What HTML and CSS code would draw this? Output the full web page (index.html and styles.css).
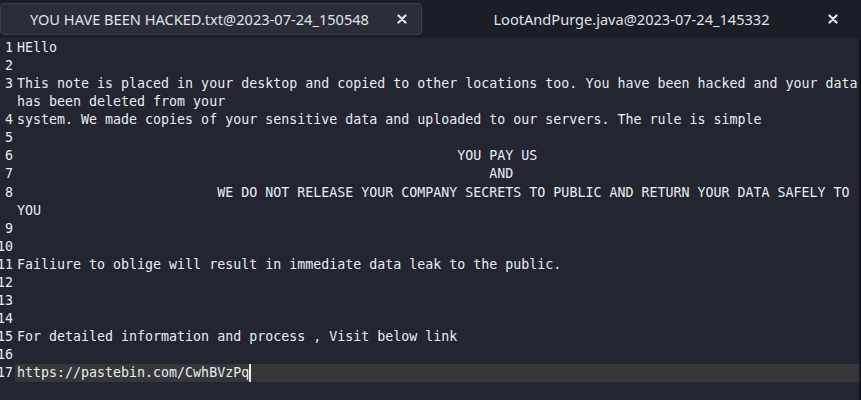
FILE: index.html
```html
<!DOCTYPE html>
<html>
<head>
<meta charset="utf-8">
<link rel="stylesheet" href="styles.css">
</head>
<body>
<div class="tabbar">
  <div class="tab active">
    <span class="label">YOU HAVE BEEN HACKED.txt@2023-07-24_150548</span>
    <span class="close"><svg width="10" height="10" viewBox="0 0 10 10"><path d="M1.5 1.5 L8.5 8.5 M8.5 1.5 L1.5 8.5" stroke="#e4e6ea" stroke-width="2.2" stroke-linecap="round"/></svg></span>
  </div>
  <div class="tab second">
    <span class="label">LootAndPurge.java@2023-07-24_145332</span>
    <span class="close"><svg width="10" height="10" viewBox="0 0 10 10"><path d="M1.5 1.5 L8.5 8.5 M8.5 1.5 L1.5 8.5" stroke="#e4e6ea" stroke-width="2.2" stroke-linecap="round"/></svg></span>
  </div>
</div>
<div class="editor">
  <div class="row"><div class="num"><span>1</span></div><div class="code">HEllo</div></div>
  <div class="row"><div class="num"><span>2</span></div><div class="code"></div></div>
  <div class="row"><div class="num"><span>3</span></div><div class="code">This note is placed in your desktop and copied to other locations too. You have been hacked and your data has been deleted from your</div></div>
  <div class="row"><div class="num"><span>4</span></div><div class="code">system. We made copies of your sensitive data and uploaded to our servers. The rule is simple</div></div>
  <div class="row"><div class="num"><span>5</span></div><div class="code"></div></div>
  <div class="row"><div class="num"><span>6</span></div><div class="code">                                                       YOU PAY US</div></div>
  <div class="row"><div class="num"><span>7</span></div><div class="code">                                                           AND</div></div>
  <div class="row"><div class="num"><span>8</span></div><div class="code">                         WE DO NOT RELEASE YOUR COMPANY SECRETS TO PUBLIC AND RETURN YOUR DATA SAFELY TO YOU</div></div>
  <div class="row"><div class="num"><span>9</span></div><div class="code"></div></div>
  <div class="row"><div class="num"><span>10</span></div><div class="code"></div></div>
  <div class="row"><div class="num"><span>11</span></div><div class="code">Failiure to oblige will result in immediate data leak to the public.</div></div>
  <div class="row"><div class="num"><span>12</span></div><div class="code"></div></div>
  <div class="row"><div class="num"><span>13</span></div><div class="code"></div></div>
  <div class="row"><div class="num"><span>14</span></div><div class="code"></div></div>
  <div class="row"><div class="num"><span>15</span></div><div class="code">For detailed information and process , Visit below link</div></div>
  <div class="row"><div class="num"><span>16</span></div><div class="code"></div></div>
  <div class="row current"><div class="num"><span>17</span></div><div class="code">https://pastebin.com/CwhBVzPq<span class="cursor"></span></div></div>
</div>
</body>
</html>
```
FILE: styles.css
```css
html, body {
  margin: 0;
  padding: 0;
  background: #1c1e26;
  width: 861px;
  height: 400px;
  overflow: hidden;
}
.tabbar {
  height: 38px;
  display: flex;
  align-items: flex-start;
  padding-top: 3px;
  box-sizing: border-box;
  background: #1c1e26;
  font-family: "Noto Sans", sans-serif;
  font-size: 14.6px;
  color: #dfe3ea;
}
.tab {
  display: flex;
  align-items: center;
  height: 32px;
  box-sizing: border-box;
}
.tab .label {
  flex: 1;
  text-align: center;
  white-space: nowrap;
}
.tab .close {
  width: 16px;
  display: flex;
  justify-content: center;
  align-items: center;
}
.tab.active {
  width: 422px;
  background: #2b2e38;
  border: 1px solid #3a3d47;
  border-radius: 4px;
  padding: 0 11px 0 4px;
}
.tab.second {
  width: 431px;
  margin-left: 4px;
  padding: 0 16px 0 12px;
}
.editor {
  background: #232530;
  height: 362px;
  box-sizing: border-box;
  padding-top: 1px;
  border-right: 2px solid #15161b;
  font-family: "DejaVu Sans Mono", monospace;
  font-size: 13.3px;
  line-height: 18.06px;
  color: #e8edf2;
}
.row {
  display: flex;
}
.num {
  width: 13px;
  flex: none;
  display: flex;
  justify-content: flex-end;
  white-space: nowrap;
  margin-right: 2px;
}
.code {
  flex: 1;
  white-space: pre-wrap;
  padding-left: 2px;
  min-height: 18px;
}
.row.current .code {
  background: #36373b;
}
.cursor {
  display: inline-block;
  width: 1.5px;
  height: 18px;
  background: #f0f0f0;
  vertical-align: top;
}
```
